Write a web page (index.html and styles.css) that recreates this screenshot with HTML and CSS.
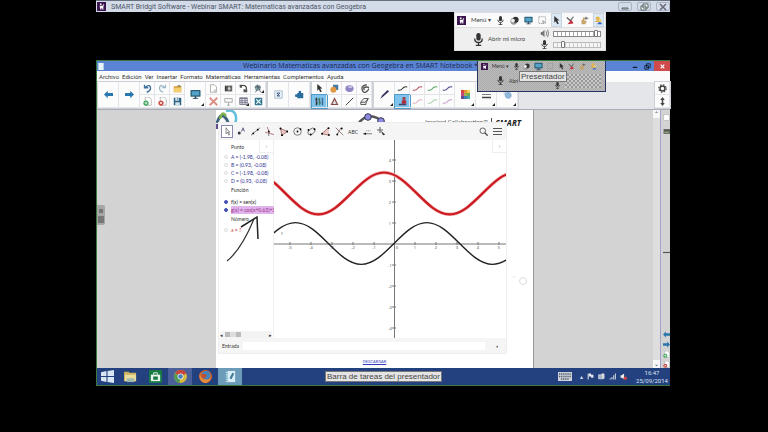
FILE: index.html
```html
<!DOCTYPE html>
<html lang="es">
<head>
<meta charset="utf-8">
<meta name="viewport" content="width=device-width, initial-scale=1">
<title>SMART Bridgit Software</title>
<link rel="stylesheet" href="styles.css">
</head>
<body>
<svg class="defs" aria-hidden="true">
  <symbol id="smart" viewBox="0 0 12 12"><path fill="#3d1650" d="M0 0h12v12H0z"/><path fill="#fff" d="M4 2h2v2H4zM3.500 5h4l1-2h1L8.500 6v4H7V8H6v2H4.500z"/></symbol>
  <symbol id="mic" viewBox="0 0 12 12"><rect x="4" y="0" width="4" height="7" rx="2" fill="#333"/><path d="M2.500 5c0 5 7 5 7 0M6 9v2M3.500 11.500h5" fill="none" stroke="#333" stroke-width="1.200"/></symbol>
  <symbol id="speaker" viewBox="0 0 12 12"><path d="M1 4h2l3-3v10L3 8H1z" fill="#777"/><path d="M8 3q2 3 0 6M10 1q3 5 0 10" fill="none" stroke="#555"/></symbol>
  <symbol id="camera" viewBox="0 0 12 12"><circle cx="5" cy="7" r="4.500" fill="#999"/><circle cx="7.500" cy="5" r="4" fill="#333"/><circle cx="4" cy="6" r="2.500" fill="#eee"/></symbol>
  <symbol id="screen" viewBox="0 0 12 12"><rect x=".5" y="1" width="11" height="7.500" rx="1" fill="#2c6079"/><path d="M2 2.500h8V7H2z" fill="#54a4c9"/><path d="M5 8h2v2h2v1H3v-1h2z" fill="#37556a"/></symbol>
  <symbol id="region" viewBox="0 0 12 12"><path d="M1 1h9v9H1z" fill="none" stroke="#888" stroke-dasharray="1.500 1"/><path d="m6 5 5 4H8l-2 2z" fill="#aaa"/></symbol>
  <symbol id="cursor" viewBox="0 0 12 12"><path d="M3 0v9l2-2 2 4 2-1-2-4h3z" fill="#333"/></symbol>
  <symbol id="redpen" viewBox="0 0 12 12"><path d="M1 2 9 9M10 1 5 7" stroke="#555" stroke-width="1.500"/><path d="m2 11 5-6 3 5z" fill="#c73546"/></symbol>
  <symbol id="hand" viewBox="0 0 12 12"><path d="M2 11V5h2V2h2v4l3 1-2 4z" fill="#c9a468"/><path d="M8 1v4M6 3h5" stroke="#555" stroke-width="1.200"/></symbol>
  <symbol id="people" viewBox="0 0 12 12"><circle cx="5" cy="3" r="2.500" fill="#e3b643"/><path d="M1 8q4-5 8 0z" fill="#e0a642"/><circle cx="8" cy="6" r="2" fill="#f0ce65"/><path d="M4 11q4-6 7 0z" fill="#406ac2"/></symbol>
  <symbol id="left" viewBox="0 0 12 12"><path d="m0 6 5-5v3h7v4H5v3z" fill="#2877ad"/></symbol>
  <symbol id="right" viewBox="0 0 12 12"><path d="m12 6-5-5v3H0v4h7v3z" fill="#2877ad"/></symbol>
  <symbol id="undo" viewBox="0 0 12 12"><path d="M2 1v4h5M2 5q8-6 8 1 0 3-5 5" fill="none" stroke="#3c6f9c" stroke-width="1.800"/></symbol>
  <symbol id="redo" viewBox="0 0 12 12"><path d="M10 1v4H5m5 0Q2-1 2 6q0 3 5 5" fill="none" stroke="#9db9c9" stroke-width="1.600"/></symbol>
  <symbol id="folder" viewBox="0 0 12 12"><path d="M1 3h4l1-1h5v9H1z" fill="#d8a138"/><path d="M2 5h10l-2 6H1z" fill="#f3d06f"/><path d="M6 3q3-3 4 1" fill="none" stroke="#397aa5"/></symbol>
  <symbol id="addpage" viewBox="0 0 12 12"><path d="M3 0h5l3 3v8H3z" fill="#fff" stroke="#aaa"/><circle cx="4" cy="8" r="3.500" fill="#36a457"/><path d="M4 6v4M2 8h4" stroke="#fff"/></symbol>
  <symbol id="delpage" viewBox="0 0 12 12"><path d="M3 0h5l3 3v8H3z" fill="#fff" stroke="#aaa"/><circle cx="4" cy="8" r="3.500" fill="#cc4c48"/><path d="m2.500 6.500 3 3m0-3-3 3" stroke="#fff"/></symbol>
  <symbol id="save" viewBox="0 0 12 12"><path d="M1 1h9l1 1v9H1z" fill="#2f6384"/><path d="M3 1h5v4H3zM3 7h6v4H3z" fill="#d5e3eb"/><path d="M6 1h1v3H6z" fill="#2f6384"/></symbol>
  <symbol id="pagesel" viewBox="0 0 12 12"><path d="M2 1h5l3 3v7H2z" fill="#fff" stroke="#999"/><circle cx="8" cy="9" r="2" fill="#ccc"/></symbol>
  <symbol id="capture" viewBox="0 0 12 12"><path d="M1 2h10v8H1z" fill="#777"/><path d="M2 3v6M4 3v6M9 3v6" stroke="#222"/><circle cx="7" cy="6" r="2" fill="#ccc"/></symbol>
  <symbol id="doccam" viewBox="0 0 12 12"><path d="M1 2h5q4 0 4 5" fill="none" stroke="#333" stroke-width="1.500"/><path d="M1 1h3v4H1zM6 7h5v4H6z" fill="#555"/></symbol>
  <symbol id="cross" viewBox="0 0 12 12"><path d="m1 1 10 10m0-10L1 11" stroke="#dc8f86" stroke-width="2.500"/></symbol>
  <symbol id="board" viewBox="0 0 12 12"><path d="M1 2h10v5H1zM6 7v4M4 11h4" fill="#f7f7f7" stroke="#999"/></symbol>
  <symbol id="table" viewBox="0 0 12 12"><path d="M1 1h10v9H1z" fill="#eee" stroke="#667"/><path d="M1 2h10M1 5h10M1 7.500h10M4 2v8M8 2v8" stroke="#668"/></symbol>
  <symbol id="math" viewBox="0 0 12 12"><rect x="1" y="1" width="10" height="10" rx="1" fill="#32768f"/><path d="m3 3 6 6m0-6-6 6" stroke="#e3f5fa" stroke-width="1.500"/></symbol>
  <symbol id="measure" viewBox="0 0 12 12"><circle cx="5" cy="5" r="4" fill="#8aa"/><path d="m4 1 5 10M1 4h8M5 6l-3 5" stroke="#445"/></symbol>
  <symbol id="formula" viewBox="0 0 12 12"><path d="M1 1h10v10H1z" fill="#e7eff5" stroke="#99b5c9"/><path d="M4 4h4M4 8h4M4 4l3 4M8 4 4 8" stroke="#347"/></symbol>
  <symbol id="puzzle" viewBox="0 0 12 12"><path d="M3 4h2q-1-3 1.500-3T8 4h3v7H3V9q-3 1-3-1.500T3 6z" fill="#296d9f"/></symbol>
  <symbol id="shapes" viewBox="0 0 12 12"><path d="M4 1h7v7H4z" fill="#467aa5"/><circle cx="4.500" cy="7.500" r="4" fill="#e29945"/></symbol>
  <symbol id="ball" viewBox="0 0 12 12"><ellipse cx="6" cy="6" rx="5.500" ry="4.500" fill="#8d86c2"/><ellipse cx="7" cy="4" rx="3" ry="1.500" fill="#c7c3e9"/></symbol>
  <symbol id="spiral" viewBox="0 0 12 12"><path d="M9 1Q1 2 3 8t7 1-1-5-3 4" fill="none" stroke="#555" stroke-width="1.800"/></symbol>
  <symbol id="pens" viewBox="0 0 12 12"><path d="M2 1v10" stroke="#333" stroke-width="2"/><path d="M6 1v10" stroke="#388b62" stroke-width="2"/><path d="M10 1v10" stroke="#436e99" stroke-width="2"/><path d="m0 2 4 7M4 2l4 7" stroke="#557"/></symbol>
  <symbol id="tri" viewBox="0 0 12 12"><path d="m6 2 4 8H2z" fill="#ddd" stroke="#844" stroke-width="1.500"/></symbol>
  <symbol id="line" viewBox="0 0 12 12"><path d="M1 11 11 1" stroke="#444" stroke-width="1.300"/></symbol>
  <symbol id="eraser" viewBox="0 0 12 12"><path d="m1 7 4-5h6L8 8v2H1z" fill="#eee" stroke="#333"/><path d="M1 7h6l4-5" fill="none" stroke="#333"/></symbol>
  <symbol id="pen" viewBox="0 0 12 12"><path d="m0 12 3-5 7-7 2 2-8 7z" fill="#34345d"/></symbol>
  <symbol id="wave" viewBox="0 0 14 8"><path d="M1 6q4 1 6-2t6-2" fill="none" stroke="currentColor" stroke-width="1.400"/></symbol>
  <symbol id="marker" viewBox="0 0 12 12"><path d="M6 0h4v7H6z" fill="#a34454"/><path d="M5 5h6v4H5z" fill="#b12d3c"/><path d="M1 10h10" stroke="#446" stroke-width="2"/></symbol>
  <symbol id="palette" viewBox="0 0 12 12"><path fill="#d7463d" d="M0 0h4v4H0z"/><path fill="#e99135" d="M4 0h4v4H4z"/><path fill="#ead04c" d="M8 0h4v4H8z"/><path fill="#c04b84" d="M0 4h4v4H0z"/><path fill="#9fb04c" d="M4 4h4v4H4z"/><path fill="#67ac57" d="M8 4h4v4H8z"/><path fill="#614b99" d="M0 8h4v4H0z"/><path fill="#3c83bb" d="M4 8h4v4H4z"/><path fill="#47a8a8" d="M8 8h4v4H8z"/></symbol>
  <symbol id="strokes" viewBox="0 0 12 12"><path d="M0 2h12M0 6h12" stroke="#555"/><path d="M0 10h12" stroke="#444" stroke-width="2"/></symbol>
  <symbol id="fill" viewBox="0 0 12 12"><circle cx="4" cy="4" r="3.500" fill="#c6d9eb"/><circle cx="7" cy="7" r="4.500" fill="#8db6d8"/></symbol>
  <symbol id="gear" viewBox="0 0 12 12"><circle cx="6" cy="6" r="3.300" fill="none" stroke="#444" stroke-width="2"/><circle cx="6" cy="6" r="5" fill="none" stroke="#444" stroke-width="1.500" stroke-dasharray="2 1.930"/></symbol>
  <symbol id="updown" viewBox="0 0 12 12"><path d="m6 0 3 4H7v4h2l-3 4-3-4h2V4H3z" fill="#444"/></symbol>
  <symbol id="g-move" viewBox="0 0 12 12"><path d="M4 1v8l2-2 2 4 1-1-2-3h2z" fill="#fff" stroke="#555" stroke-width=".9"/></symbol>
  <symbol id="g-point" viewBox="0 0 12 12"><circle cx="3" cy="8" r="2" fill="#334"/><path d="m6 6 2-5 2 5M7 4h2" stroke="#447" fill="none"/></symbol>
  <symbol id="g-line" viewBox="0 0 12 12"><path d="M0 11 12 1" stroke="#555"/><circle cx="3" cy="8.500" r="1.200"/><circle cx="9" cy="3.500" r="1.200"/></symbol>
  <symbol id="g-perp" viewBox="0 0 12 12"><path d="m0 7 12 3M6 8 3 0" stroke="#a55"/><path d="M5 8v4" stroke="#555"/><circle cx="5" cy="6" r="1.200"/></symbol>
  <symbol id="g-poly" viewBox="0 0 12 12"><path d="m2 2 9 4-7 5z" fill="#ebcaca" stroke="#955"/><circle cx="2" cy="2" r="1.300"/><circle cx="11" cy="6" r="1.300"/><circle cx="4" cy="11" r="1.300"/></symbol>
  <symbol id="g-circle" viewBox="0 0 12 12"><circle cx="6" cy="6" r="5" fill="none" stroke="#555"/><circle cx="6" cy="6" r="1.200"/><circle cx="10" cy="3" r="1.200"/></symbol>
  <symbol id="g-conic" viewBox="0 0 12 12"><ellipse cx="6" cy="6" rx="5.500" ry="3.500" fill="none" stroke="#555" transform="rotate(-40 6 6)"/><circle cx="2" cy="4" r="1.200"/><circle cx="5" cy="10" r="1.200"/><circle cx="10" cy="3" r="1.200"/></symbol>
  <symbol id="g-angle" viewBox="0 0 12 12"><path d="M10 1 1 9l10 2" fill="#ebcaca" stroke="#955"/><circle cx="10" cy="1.500" r="1.300"/><circle cx="1.500" cy="9" r="1.300"/><circle cx="10.500" cy="10.500" r="1.300"/></symbol>
  <symbol id="g-reflect" viewBox="0 0 12 12"><path d="m1 1 10 10M8 1 3 10" stroke="#755"/><circle cx="9" cy="2" r="1.200"/><circle cx="3" cy="10" r="1.200"/></symbol>
  <symbol id="g-slider" viewBox="0 0 12 12"><path d="M0 9h12" stroke="#555"/><circle cx="3" cy="9" r="1.300"/><path d="M4 5h6" stroke="#777" stroke-dasharray="1.500 1"/></symbol>
  <symbol id="g-pan" viewBox="0 0 12 12"><path d="M4 0v8M0 4h8" stroke="#666" stroke-width="1.500"/><path d="m5 5 6 5-3 1z" fill="#333"/></symbol>
  <symbol id="search" viewBox="0 0 12 12"><circle cx="5" cy="5" r="3.700" fill="none" stroke="#555" stroke-width="1.200"/><path d="m7.500 7.500 4 4" stroke="#444" stroke-width="1.800"/></symbol>
  <symbol id="burger" viewBox="0 0 12 12"><path d="M0 2h12M0 6h12M0 10h12" stroke="#555" stroke-width="1.400"/></symbol>
  <symbol id="win" viewBox="0 0 12 12"><path d="m0 2 5-1v4.500H0zM6 1l6-1v5.500H6zM0 6.500h5V11l-5-1zM6 6.500h6V12l-6-1z" fill="#d9e6f4"/></symbol>
  <symbol id="explorer" viewBox="0 0 14 12"><path d="M0 1h5l1 1h7v9H0z" fill="#c9b15e"/><path d="M1 4h12v7H1z" fill="#e8db9c"/><path d="M3 8h8v4H3z" fill="#9fb9aa"/></symbol>
  <symbol id="store" viewBox="0 0 14 14"><path d="M0 0h14v14H0z" fill="#177a45"/><path d="M2 5h10v7H2z" fill="#e8f3eb"/><path d="M5 5V3h4v2M5 9h4M7 7v4" stroke="#e8f3eb" fill="none"/><path d="M4.500 7h5v3.500h-5z" fill="#177a45"/></symbol>
  <symbol id="chrome" viewBox="0 0 12 12"><circle cx="6" cy="6" r="6" fill="#d6b93f"/><path d="M6 6 1 3a6 6 0 0 1 10.500 0z" fill="#c8453b"/><path d="M6 6 1 3a6 6 0 0 0 4 9z" fill="#4d9955"/><circle cx="6" cy="6" r="2.800" fill="#eee"/><circle cx="6" cy="6" r="2.100" fill="#4a7fc0"/></symbol>
  <symbol id="firefox" viewBox="0 0 12 12"><circle cx="6" cy="6" r="6" fill="#d4622e"/><circle cx="6.500" cy="5" r="4" fill="#4384bb"/><path d="M1 2q0 7 6 7 3 0 4-3 0 5-5 6-7-1-5-10" fill="#e78c39"/><path d="M3 4q3-1 4 1L5 8 2 6z" fill="#c84c2b"/></symbol>
  <symbol id="notebook" viewBox="0 0 12 14"><path d="M1 1h10v12H1z" fill="#d5edf3"/><path d="M2 1v12" stroke="#5097aa" stroke-width="2" stroke-dasharray="1 1"/><path d="m5 9 3-6 2 1-3 6z" fill="#3d7798"/></symbol>
  <symbol id="keyboard" viewBox="0 0 14 9"><path d="M0 0h14v9H0z" fill="#cdd2da"/><path d="M1 2h12M1 4.500h12M3 7h8" stroke="#51596a" stroke-width="1.300" stroke-dasharray="1.300 .8"/></symbol>
  <symbol id="flag" viewBox="0 0 12 12"><path d="M2 1v10" stroke="#fff" stroke-width="1.500"/><path d="M3 1h4v2h4v5H7V6H3z" fill="#e1e7f0"/></symbol>
  <symbol id="net" viewBox="0 0 12 12"><path d="M1 3h8v7H1z" fill="#a5b3c9" stroke="#eee"/><path d="M6 1h5v9H8z" fill="#ddd"/></symbol>
  <symbol id="signal" viewBox="0 0 12 12"><path d="M1 9h2v2H1zM4 7h2v4H4zM7 4h2v7H7zM10 1h2v10h-2z" fill="#b8c3d6"/></symbol>
  <symbol id="mute" viewBox="0 0 12 12"><path d="M1 4h2l4-3v10L3 8H1z" fill="#eee"/><circle cx="9" cy="9" r="3" fill="#c44"/></symbol>
</svg>

<div class="desk">
  <div class="viewer">
    <header class="host-bar">
      <svg class="i9"><use href="#smart"/></svg>
      <h1>SMART Bridgit Software - Webinar SMART: Matematicas avanzadas con Geogebra</h1>
      <div class="host-controls">
        <button aria-label="Minimizar"><svg viewBox="0 0 12 8"><path d="M3 5h6v1H3z" fill="#fff" stroke="#566"/></svg></button>
        <button aria-label="Restaurar"><svg viewBox="0 0 12 8"><path d="M5 1h5v4H5zM3 3h5v4H3z" fill="#fff" stroke="#566"/></svg></button>
        <button aria-label="Cerrar"><svg viewBox="0 0 12 8"><path d="m3 1 6 6m0-6L3 7" stroke="#667" stroke-width="1.500"/></svg></button>
      </div>
    </header>

    <section class="meeting" aria-label="Reunión">
      <div class="meeting-tools">
        <svg class="i9"><use href="#smart"/></svg>
        <button class="menu-button">Menú <span>▾</span></button>
        <button aria-label="Micrófono"><svg class="i9"><use href="#mic"/></svg></button>
        <button aria-label="Cámara"><svg class="i9"><use href="#camera"/></svg></button>
        <button aria-label="Pantalla"><svg class="i9"><use href="#screen"/></svg></button>
        <button aria-label="Región"><svg class="i9"><use href="#region"/></svg></button>
        <button aria-label="Puntero" class="pressed"><svg class="i9"><use href="#cursor"/></svg></button>
        <button aria-label="Dibujar"><svg class="i9"><use href="#redpen"/></svg></button>
        <button aria-label="Mano"><svg class="i9"><use href="#hand"/></svg></button>
        <button aria-label="Participantes" class="pressed"><svg class="i9"><use href="#people"/></svg></button>
      </div>
      <div class="meeting-audio">
        <button class="open-mic"><svg class="i13"><use href="#mic"/></svg>Abrir mi micro</button>
        <div class="levels">
          <label><svg class="i9"><use href="#speaker"/></svg><input type="range" min="0" max="100" value="96" aria-label="Altavoz"></label>
          <label><svg class="i9"><use href="#mic"/></svg><input type="range" class="soft" min="0" max="100" value="17" aria-label="Micrófono"></label>
        </div>
      </div>
    </section>

    <main class="remote">
      <header class="titlebar">
        <svg class="title-icon" viewBox="0 0 8 8"><path d="M1 0h6v8H1z" fill="#e6f5fb"/></svg>
        <h2>Webinario Matematicas avanzadas con Geogebra en SMART Notebook * -</h2>
        <div class="win-controls">
          <button aria-label="Minimizar"><svg viewBox="0 0 14 10"><path d="M5 6h5" stroke="#123" stroke-width="1.500"/></svg></button>
          <button aria-label="Restaurar"><svg viewBox="0 0 14 10"><path d="M6 2h4v4H6zM4 4h4v4H4z" fill="none" stroke="#123"/></svg></button>
          <button aria-label="Cerrar" class="close"><svg viewBox="0 0 14 10"><path d="m5 3 4 4m0-4L5 7" stroke="#fff" stroke-width="1.300"/></svg></button>
        </div>
      </header>
      <nav class="menubar">
        <button>Archivo</button><button>Edición</button><button>Ver</button><button>Insertar</button><button>Formato</button><button>Matemáticas</button><button>Herramientas</button><button>Complementos</button><button>Ayuda</button>
      </nav>
      <div class="toolbar">
        <div class="group">
          <button class="big" aria-label="Anterior"><svg class="i9"><use href="#left"/></svg></button>
          <button class="big" aria-label="Siguiente"><svg class="i9"><use href="#right"/></svg></button>
          <button aria-label="Deshacer"><svg class="i9"><use href="#undo"/></svg></button>
          <button aria-label="Añadir página"><svg class="i9"><use href="#addpage"/></svg></button>
          <button aria-label="Rehacer"><svg class="i9"><use href="#redo"/></svg></button>
          <button aria-label="Eliminar página"><svg class="i9"><use href="#delpage"/></svg></button>
          <button aria-label="Abrir"><svg class="i9"><use href="#folder"/></svg></button>
          <button aria-label="Guardar"><svg class="i9"><use href="#save"/></svg></button>
          <button class="big more" aria-label="Ver pantallas"><svg class="i11"><use href="#screen"/></svg></button>
          <button aria-label="Sombra"><svg class="i9"><use href="#pagesel"/></svg></button>
          <button aria-label="Borrar"><svg class="i9"><use href="#cross"/></svg></button>
          <button aria-label="Capturar"><svg class="i9"><use href="#capture"/></svg></button>
          <button aria-label="Pizarra"><svg class="i9"><use href="#board"/></svg></button>
          <button aria-label="Cámara de documentos"><svg class="i9"><use href="#doccam"/></svg></button>
          <button class="more" aria-label="Tabla"><svg class="i9"><use href="#table"/></svg></button>
          <button class="more" aria-label="Medición"><svg class="i9"><use href="#measure"/></svg></button>
          <button aria-label="GeoGebra"><svg class="i9"><use href="#math"/></svg></button>
        </div>
        <div class="group">
          <button class="big" aria-label="Fórmula"><svg class="i9"><use href="#formula"/></svg></button>
          <button class="big" aria-label="Complementos"><svg class="i9"><use href="#puzzle"/></svg></button>
        </div>
        <div class="group">
          <button aria-label="Seleccionar"><svg class="i9"><use href="#cursor"/></svg></button>
          <button class="on" aria-label="Lápices"><svg class="i9"><use href="#pens"/></svg></button>
          <button aria-label="Formas"><svg class="i9"><use href="#shapes"/></svg></button>
          <button aria-label="Triángulo"><svg class="i9"><use href="#tri"/></svg></button>
          <button aria-label="Polígono"><svg class="i9"><use href="#ball"/></svg></button>
          <button aria-label="Línea"><svg class="i9"><use href="#line"/></svg></button>
          <button aria-label="Texto"><svg class="i9"><use href="#spiral"/></svg></button>
          <button aria-label="Borrador"><svg class="i9"><use href="#eraser"/></svg></button>
        </div>
        <div class="group">
          <button class="big more" aria-label="Pluma"><svg class="i9"><use href="#pen"/></svg></button>
          <button class="black" aria-label="Trazo negro"><svg class="ink"><use href="#wave"/></svg></button>
          <button class="on" aria-label="Marcador"><svg class="i9"><use href="#marker"/></svg></button>
          <button class="red" aria-label="Trazo rojo"><svg class="ink"><use href="#wave"/></svg></button>
          <button class="pink" aria-label="Trazo rosa"><svg class="ink"><use href="#wave"/></svg></button>
          <button class="green" aria-label="Trazo verde"><svg class="ink"><use href="#wave"/></svg></button>
          <button class="mint" aria-label="Trazo menta"><svg class="ink"><use href="#wave"/></svg></button>
          <button class="blue" aria-label="Trazo azul"><svg class="ink"><use href="#wave"/></svg></button>
          <button class="lilac" aria-label="Trazo lila"><svg class="ink"><use href="#wave"/></svg></button>
          <button class="big more" aria-label="Color"><svg class="i9"><use href="#palette"/></svg></button>
          <button class="big more" aria-label="Grosor"><svg class="i9"><use href="#strokes"/></svg></button>
          <button class="big more" aria-label="Relleno"><svg class="i9"><use href="#fill"/></svg></button>
        </div>
        <div class="group end">
          <button aria-label="Configuración"><svg class="i9"><use href="#gear"/></svg></button>
          <button aria-label="Mover barra"><svg class="i9"><use href="#updown"/></svg></button>
        </div>
      </div>

      <div class="workspace">
        <div class="margin"><button class="tab" aria-label="Abrir panel"><svg viewBox="0 0 8 20"><path d="M2 5h4M2 7h4" stroke="#444"/><path d="M1 11h6v7H1z" fill="#777"/></svg></button></div>
        <article class="page">
          <div class="letterhead">
            <svg class="swirl" viewBox="0 0 24 20"><path d="M1 13Q5 0 11 10l3 7" fill="none" stroke="#3f657c" stroke-width="3"/><path d="M10 1q9-2 10 6t-7 11" fill="none" stroke="#64bfdc" stroke-width="2.500"/><path d="M4 9q2-9 6-3" fill="none" stroke="#7eb34d" stroke-width="2.500"/><path d="M1 14v5" stroke="#604c91" stroke-width="2"/></svg>
            <svg class="nodes" viewBox="0 0 32 14"><path d="M3 14Q14-1 29 13" fill="none" stroke="#555" stroke-width="2.500"/><circle cx="13" cy="7" r="3.300" fill="#8c8be0" stroke="#335"/><circle cx="26" cy="11" r="3.300" fill="#8c8be0" stroke="#335"/></svg>
            <p class="slogan">Inspired Collaboration™</p>
            <p class="brand">SMART</p>
          </div>
          <section class="ggb" aria-label="GeoGebra">
            <div class="ggb-tools">
              <button class="active" aria-label="Mover"><svg class="i9"><use href="#g-move"/></svg></button>
              <button aria-label="Punto"><svg class="i9"><use href="#g-point"/></svg></button>
              <button aria-label="Recta"><svg class="i9"><use href="#g-line"/></svg></button>
              <button aria-label="Perpendicular"><svg class="i9"><use href="#g-perp"/></svg></button>
              <button aria-label="Polígono"><svg class="i9"><use href="#g-poly"/></svg></button>
              <button aria-label="Circunferencia"><svg class="i9"><use href="#g-circle"/></svg></button>
              <button aria-label="Cónica"><svg class="i9"><use href="#g-conic"/></svg></button>
              <button aria-label="Ángulo"><svg class="i9"><use href="#g-angle"/></svg></button>
              <button aria-label="Simetría"><svg class="i9"><use href="#g-reflect"/></svg></button>
              <button>ABC</button>
              <button aria-label="Deslizador"><svg class="i9"><use href="#g-slider"/></svg></button>
              <button aria-label="Desplazar"><svg class="i9"><use href="#g-pan"/></svg></button>
              <span class="spring"></span>
              <button aria-label="Buscar"><svg class="i9"><use href="#search"/></svg></button>
              <button aria-label="Menú"><svg class="i9"><use href="#burger"/></svg></button>
            </div>
            <div class="ggb-body">
              <div class="algebra">
                <button class="fold">‹</button>
                <h3>Punto</h3>
                <label><input type="checkbox">A = (-1.98, -0.08)</label>
                <label><input type="checkbox">B = (0.93, -0.08)</label>
                <label><input type="checkbox">C = (-1.98, -0.08)</label>
                <label><input type="checkbox">D = (0.93, -0.08)</label>
                <h3>Función</h3>
                <label class="fx"><input type="checkbox" checked>f(x) = sen(x)</label>
                <label class="gx"><input type="checkbox" checked><span>g(x) = cos(x+0.63)+3</span></label>
                <h3>Número</h3>
                <label class="num"><input type="checkbox">a = ?</label>
                <div class="hscroll"><span>◂</span><i></i><span>▸</span></div>
                <svg class="scribble" viewBox="0 0 40 50"><path d="M2 47Q16 36 29 5" fill="none" stroke="#333" stroke-width="1.200"/><path d="M16 13 32 3l1 22" fill="none" stroke="#222" stroke-width="1.500"/></svg>
              </div>
              <div class="plot">
                <button class="fold">›</button>
                <svg viewBox="0 0 232 198" preserveAspectRatio="none" role="img" aria-label="Gráficas de f y g">
                  <path class="axis" d="M0 104H232M120.500 0V198"/>
                  <path class="axis" d="M16 102v3M37 102v3M58 102v3M79 102v3M100 102v3M141 102v3M162 102v3M183 102v3M204 102v3M225 102v3M118 20h4M118 41h4M118 62h4M118 83h4M118 125h4M118 146h4M118 167h4M118 188h4"/>
                  <path class="f" d="M-44.200 124.400C-20.300 124.400-2.400 82.600 21.500 82.600S63.300 124.400 87.200 124.400 128.900 82.600 152.800 82.600 194.600 124.400 218.500 124.400 260.300 82.600 284.200 82.600"/>
                  <path class="g-halo" d="M-21.300 32.500C2.600 32.500 20.400 74.300 44.300 74.300S86.100 32.500 110 32.500 151.800 74.300 175.700 74.300 217.400 32.500 241.300 32.500"/>
                  <path class="g" d="M-21.300 32.500C2.600 32.500 20.400 74.300 44.300 74.300S86.100 32.500 110 32.500 151.800 74.300 175.700 74.300 217.400 32.500 241.300 32.500"/>
                  <g class="ticks"><text x="16" y="109">-5</text><text x="37" y="109">-4</text><text x="58" y="109">-3</text><text x="79" y="109">-2</text><text x="100" y="109">-1</text><text x="123" y="109">0</text><text x="141" y="109">1</text><text x="162" y="109">2</text><text x="183" y="109">3</text><text x="204" y="109">4</text><text x="225" y="109">5</text><text x="116" y="22">4</text><text x="116" y="43">3</text><text x="116" y="64">2</text><text x="116" y="85">1</text><text x="116" y="127">-1</text><text x="116" y="148">-2</text><text x="116" y="169">-3</text><text x="116" y="190">-4</text><text x="8" y="95">f</text></g>
                </svg>
              </div>
            </div>
            <div class="ggb-input"><label for="entrada">Entrada</label><input id="entrada" type="text"><button aria-label="Ayuda">◖</button></div>
          </section>
          <svg class="ghost" viewBox="0 0 18 12"><circle cx="13" cy="7" r="3.500" fill="none" stroke="#ddd"/><path d="M1 3h5" stroke="#eee"/></svg>
          <a class="footer-link" href="#">DESCARGAR</a>
        </article>
        <div class="margin"></div>
        <div class="vscroll"><button aria-label="Subir">⌃</button><button aria-label="Bajar">⌄</button></div>
        <aside class="side">
          <svg class="i7" viewBox="0 0 12 12"><path d="M1 1h10v10H1z" fill="#fff" stroke="#aaa"/></svg>
          <svg class="i7" viewBox="0 0 12 12"><path d="M1 2h11v8H1z" fill="#555"/><path d="M2 6h9v3H2z" fill="#8a9a76"/></svg>
          <svg class="i7 dash" viewBox="0 0 12 12"><path d="M0 6h12" stroke="#555" stroke-width="2"/></svg>
          <svg class="i7"><use href="#left"/></svg>
          <svg class="i7"><use href="#right"/></svg>
          <svg class="i7"><use href="#addpage"/></svg>
          <svg class="i7"><use href="#delpage"/></svg>
        </aside>
      </div>

      <footer class="taskbar">
        <div class="apps">
          <button class="start" aria-label="Inicio"><svg class="i13"><use href="#win"/></svg></button>
          <button aria-label="Explorador"><svg class="i13"><use href="#explorer"/></svg></button>
          <button aria-label="Tienda"><svg class="i13"><use href="#store"/></svg></button>
          <button class="open" aria-label="Chrome"><svg class="i13"><use href="#chrome"/></svg></button>
          <button aria-label="Firefox"><svg class="i13"><use href="#firefox"/></svg></button>
          <button class="open bright" aria-label="Notebook"><svg class="i13"><use href="#notebook"/></svg></button>
        </div>
        <p class="caption">Barra de tareas del presentador</p>
        <div class="tray">
          <svg class="kbd"><use href="#keyboard"/></svg>
          <span>▴</span>
          <svg class="i7"><use href="#flag"/></svg>
          <svg class="i7"><use href="#net"/></svg>
          <svg class="i7"><use href="#signal"/></svg>
          <svg class="i7"><use href="#mute"/></svg>
          <time>16:47<br>25/09/2014</time>
        </div>
      </footer>

      <section class="shadow-panel" aria-label="Panel del presentador">
        <div class="shadow-tools">
          <svg class="i7"><use href="#smart"/></svg><span>Menú ▾</span>
          <svg class="i7"><use href="#mic"/></svg><svg class="i7"><use href="#camera"/></svg><svg class="i9"><use href="#screen"/></svg><svg class="i7"><use href="#region"/></svg><svg class="i7"><use href="#cursor"/></svg><svg class="i7"><use href="#redpen"/></svg><svg class="i7"><use href="#hand"/></svg><svg class="i7"><use href="#people"/></svg>
        </div>
        <div class="shadow-audio">
          <svg class="i9"><use href="#mic"/></svg><span>Abri</span>
          <svg class="i7"><use href="#mic"/></svg>
          <div class="dots"></div>
        </div>
        <p class="caption tip">Presentador</p>
      </section>
    </main>
  </div>
</div>
</body>
</html>
```
FILE: styles.css
```css
* { box-sizing: border-box; }
body { margin: 0; background: #000; color: #333; font: 6px/8px Lato, sans-serif; }
h1, h2, h3, p { margin: 0; font-weight: 400; }
button { display: flex; align-items: center; justify-content: center; margin: 0; padding: 0; border: 0; background: none; color: inherit; font: inherit; }
svg { display: block; flex: none; }
.defs { position: absolute; width: 0; height: 0; }
.i7 { width: 7px; height: 7px; }
.i9 { width: 9px; height: 9px; }
.i11 { width: 11px; height: 11px; }
.i13 { width: 13px; height: 13px; }

.desk { display: grid; grid-template-columns: 96fr 574fr 98fr; min-height: 100vh; }
.viewer { grid-column: 2; position: relative; display: flex; flex-direction: column; gap: 48px; padding-bottom: 46px; min-width: 0; }

.host-bar { display: flex; align-items: center; height: 12px; padding-left: 1px; gap: 5px; border-top: 1px solid #65707c; background: #d3dbe8; }
.host-bar h1 { flex: 1; color: #4c5666; font: 7px/10px Roboto, sans-serif; white-space: nowrap; }
.host-controls { display: flex; gap: 5px; }
.host-controls button { width: 14px; height: 9px; border: 1px solid #aab4c5; border-radius: 2px; }
.host-controls svg { width: 12px; height: 8px; }

/* floating meeting panel */
.meeting { position: absolute; top: 12px; right: 64px; width: 152px; background: #efefef; border: 1px solid #ddd; color: #444; }
.meeting-tools { display: flex; align-items: center; justify-content: space-between; height: 14px; padding: 0 2px; background: #fafafa; }
.meeting-tools button { height: 12px; }
.meeting-tools .pressed { background: #dce8f3; outline: 1px solid #c8d4e0; }
.meeting-tools .menu-button { gap: 2px; }
.meeting-audio { display: flex; justify-content: space-between; height: 23px; padding: 0 4px 0 17px; border-top: 1px solid #ddd; }
.open-mic { gap: 3px; }
.levels { display: flex; flex-direction: column; justify-content: space-around; }
.levels label { display: flex; align-items: center; gap: 4px; }
.levels input { appearance: none; width: 48px; height: 6px; margin: 0; border: 1px solid #888; background: repeating-linear-gradient(90deg, #fff 0 3px, #aaa 3px 4px); }
.levels input.soft { border-color: #bbb; background: repeating-linear-gradient(90deg, #f5f5f5 0 3px, #ccc 3px 4px); }
.levels input::-webkit-slider-thumb { appearance: none; width: 4px; height: 7px; border: 1px solid #777; border-radius: 1px; background: #fff; }

.remote { position: relative; flex: 1; display: flex; flex-direction: column; border: 1px solid #39793f; border-right: 0; background: #f6f7f9; }
.titlebar { display: flex; align-items: center; height: 10px; background: #5b84d5; color: #17274a; }
.title-icon { width: 8px; height: 7px; }
.titlebar h2 { flex: 1; padding-right: 8px; text-align: center; font: 7px/10px "Open Sans", sans-serif; white-space: nowrap; }
.win-controls { display: flex; }
.win-controls button { width: 13px; height: 10px; }
.win-controls svg { width: 13px; height: 9px; }
.win-controls .close { width: 16px; background: #cf4b4b; }
.menubar { display: flex; gap: 3px; height: 11px; padding-left: 2px; background: #fbfbfc; font-family: Roboto, sans-serif; }

.toolbar { display: flex; gap: 2px; height: 28px; padding: 0 0 0 1px; border-bottom: 1px solid #a9acb8; background: #e4e6ea; }
.group { display: grid; grid-auto-flow: column; grid-template-rows: 13px 13px; grid-auto-columns: auto; background: #fcfcfd; outline: 1px solid #cdd0d6; height: 26px; }
.group button { position: relative; width: 15px; border-right: 1px solid #e3e5e9; border-bottom: 1px solid #e3e5e9; }
.group .big { width: 21px; grid-row: span 2; }
.group .on { background: #7fc4ec; outline: 1px solid #4f9ac8; }
.group .more::after { content: ""; position: absolute; right: 1px; bottom: 1px; border: solid transparent; border-width: 0 0 3px 3px; border-bottom-color: #222; }
.group.end { margin-left: auto; }
.ink { width: 11px; height: 7px; }
.black { color: #333; }
.group .red { color: #b5525e; }
.group .pink { color: #e0aeb6; }
.group .green { color: #56a263; }
.group .mint { color: #a9d1ae; }
.group .blue { color: #44448c; }
.group .lilac { color: #c89ccc; }

.workspace { flex: 1; display: grid; grid-template-columns: 119fr 318fr 119fr 8px 9px; background: #d3d3d3; }
.margin { display: flex; align-items: center; }
.tab { width: 8px; height: 20px; margin-bottom: 48px; border-radius: 0 2px 2px 0; background: #a6a6a6; }
.tab svg { width: 8px; height: 20px; }
.page { position: relative; display: flex; flex-direction: column; min-width: 0; background: #fff; border-right: 1px solid #999; }
.letterhead { display: flex; align-items: flex-start; height: 13px; padding-right: 12px; }
.swirl { width: 24px; height: 20px; }
.nodes { width: 32px; height: 14px; margin-left: 115px; }
.slogan { margin-left: auto; margin-top: 8px; padding-right: 3px; border-right: 1px solid #555; color: #555; font-size: 6px; line-height: 8px; white-space: nowrap; }
.brand { margin: 8px 0 0 4px; color: #222; font: italic 700 8px/10px "Open Sans", sans-serif; }
.ggb { position: relative; flex: 1; display: flex; flex-direction: column; margin: 0 27px 15px 3px; background: #fff; outline: 1px solid #eee; }
.ggb-tools { display: flex; align-items: center; height: 17px; padding: 0 3px 0 2px; gap: 2px; background: #f5f5f5; }
.ggb-tools button { width: 12px; height: 13px; font-size: 5px; }
.ggb-tools .active { border: 1px solid #8889ad; background: #fff; }
.spring { flex: 1; }
.ggb-body { flex: 1; display: grid; grid-template-columns: 54px 1fr; gap: 1px; background: #eee; }
.algebra { position: relative; display: flex; flex-direction: column; padding-top: 3px; background: #fff; font-size: 5px; white-space: nowrap; }
.algebra h3 { padding-left: 12px; font-size: 5px; line-height: 8px; margin-bottom: 2px; }
.algebra label + h3 { margin-top: 1px; }
.algebra label { display: flex; align-items: center; color: #313494; }
.algebra input { appearance: none; flex: none; width: 4px; height: 4px; margin: 0 3px 0 5px; border: 1px solid #ddd; border-radius: 50%; }
.algebra input:checked { border-color: #4550b8; background: #4550b8; }
.algebra .fx { margin-top: 2px; color: #222; }
.algebra .gx { color: #a0308e; }
.algebra .gx span { flex: 1; background: #dfb5ec; }
.algebra .num { margin-top: 1px; color: #c33; }
.fold { position: absolute; top: 0; right: 0; width: 14px; height: 13px; border: solid #eee; border-width: 0 0 1px 1px; background: #fff; color: #888; }
.hscroll { display: flex; align-items: center; gap: 2px; height: 7px; margin: auto 1px 0; background: #f3f3f3; font-size: 5px; }
.hscroll i { width: 16px; height: 5px; border: solid #bbb; border-width: 0 5px; background: #ddd; }
.hscroll span:last-child { margin-left: auto; }
.scribble { position: absolute; left: 6px; top: 74px; width: 40px; height: 50px; }
.plot { position: relative; display: flex; background: #fff; }
.plot svg { width: 100%; height: 100%; }
.axis { fill: none; stroke: #777; }
.f { fill: none; stroke: #222; stroke-width: 1.4px; }
.g { fill: none; stroke: #cc1b23; stroke-width: 2.2px; }
.g-halo { fill: none; stroke: #f3b0b0; stroke-width: 3.4px; }
.ticks { fill: #444; font: 4px "Open Sans", sans-serif; text-anchor: middle; }
.ggb-input { display: flex; align-items: center; height: 15px; padding: 0 5px 0 3px; gap: 4px; background: #f5f5f5; font-size: 5px; }
.ggb-input input { flex: 1; min-width: 0; height: 8px; padding: 0; border: 0; background: #fff; }
.ggb-input button { width: 8px; margin-left: 4px; }
.ghost { position: absolute; right: 5px; bottom: 82px; width: 18px; height: 12px; }
.footer-link { position: absolute; bottom: 3px; align-self: center; color: #3539bd; font-size: 4px; line-height: 7px; }
.vscroll { display: flex; flex-direction: column; justify-content: space-between; background: #dedede; border-right: 1px solid #a5a4c8; }
.vscroll button { height: 8px; background: #f8f8f8; }
.side { display: flex; flex-direction: column; gap: 3px; padding: 4px 0 0 2px; overflow: hidden; }
.side .i7:nth-child(2) { margin-top: 4px; }
.side .dash { margin: auto 0 72px; }

.taskbar { display: grid; grid-template-columns: 1fr auto 1fr; align-items: center; height: 17px; background: #24417f; }
.apps { display: flex; gap: 1px; }
.apps button { width: 24px; height: 17px; }
.apps .start { width: 20px; }
.apps .open { background: #4b609a; }
.apps .bright { background: #6c9ab9; }
.caption { padding: 0 1px; border: 1px solid #777; background: #e4e4e4; color: #444; font: 8px/9px "Liberation Sans", sans-serif; white-space: nowrap; }
.tray { display: flex; align-items: center; justify-content: flex-end; gap: 4px; padding-right: 2px; color: #d9e1ef; font-family: Roboto, sans-serif; }
.kbd { width: 14px; height: 9px; margin-right: 4px; }
.tray time { margin-left: 5px; text-align: center; }

/* shadow of the presenter's own meeting panel */
.shadow-panel { position: absolute; top: 0; right: 64px; width: 129px; height: 31px; border: 1px solid #27345f; border-top: 0; background: repeating-conic-gradient(#aaa 0 25%, #bdbdbd 0 50%) 0 0 / 2px 2px; color: #333; font-size: 5px; }
.shadow-tools { display: flex; align-items: center; justify-content: space-between; height: 10px; padding: 0 8px 0 3px; }
.shadow-audio { display: flex; align-items: center; height: 19px; gap: 4px; padding: 0 4px 0 18px; }
.shadow-audio .i7 { margin: 9px 0 0 auto; }
.dots { width: 36px; height: 14px; background: repeating-conic-gradient(#999 0 25%, #c9c9c9 0 50%) 0 0 / 4px 4px; }
.tip { position: absolute; left: 41px; top: 10px; }
```
